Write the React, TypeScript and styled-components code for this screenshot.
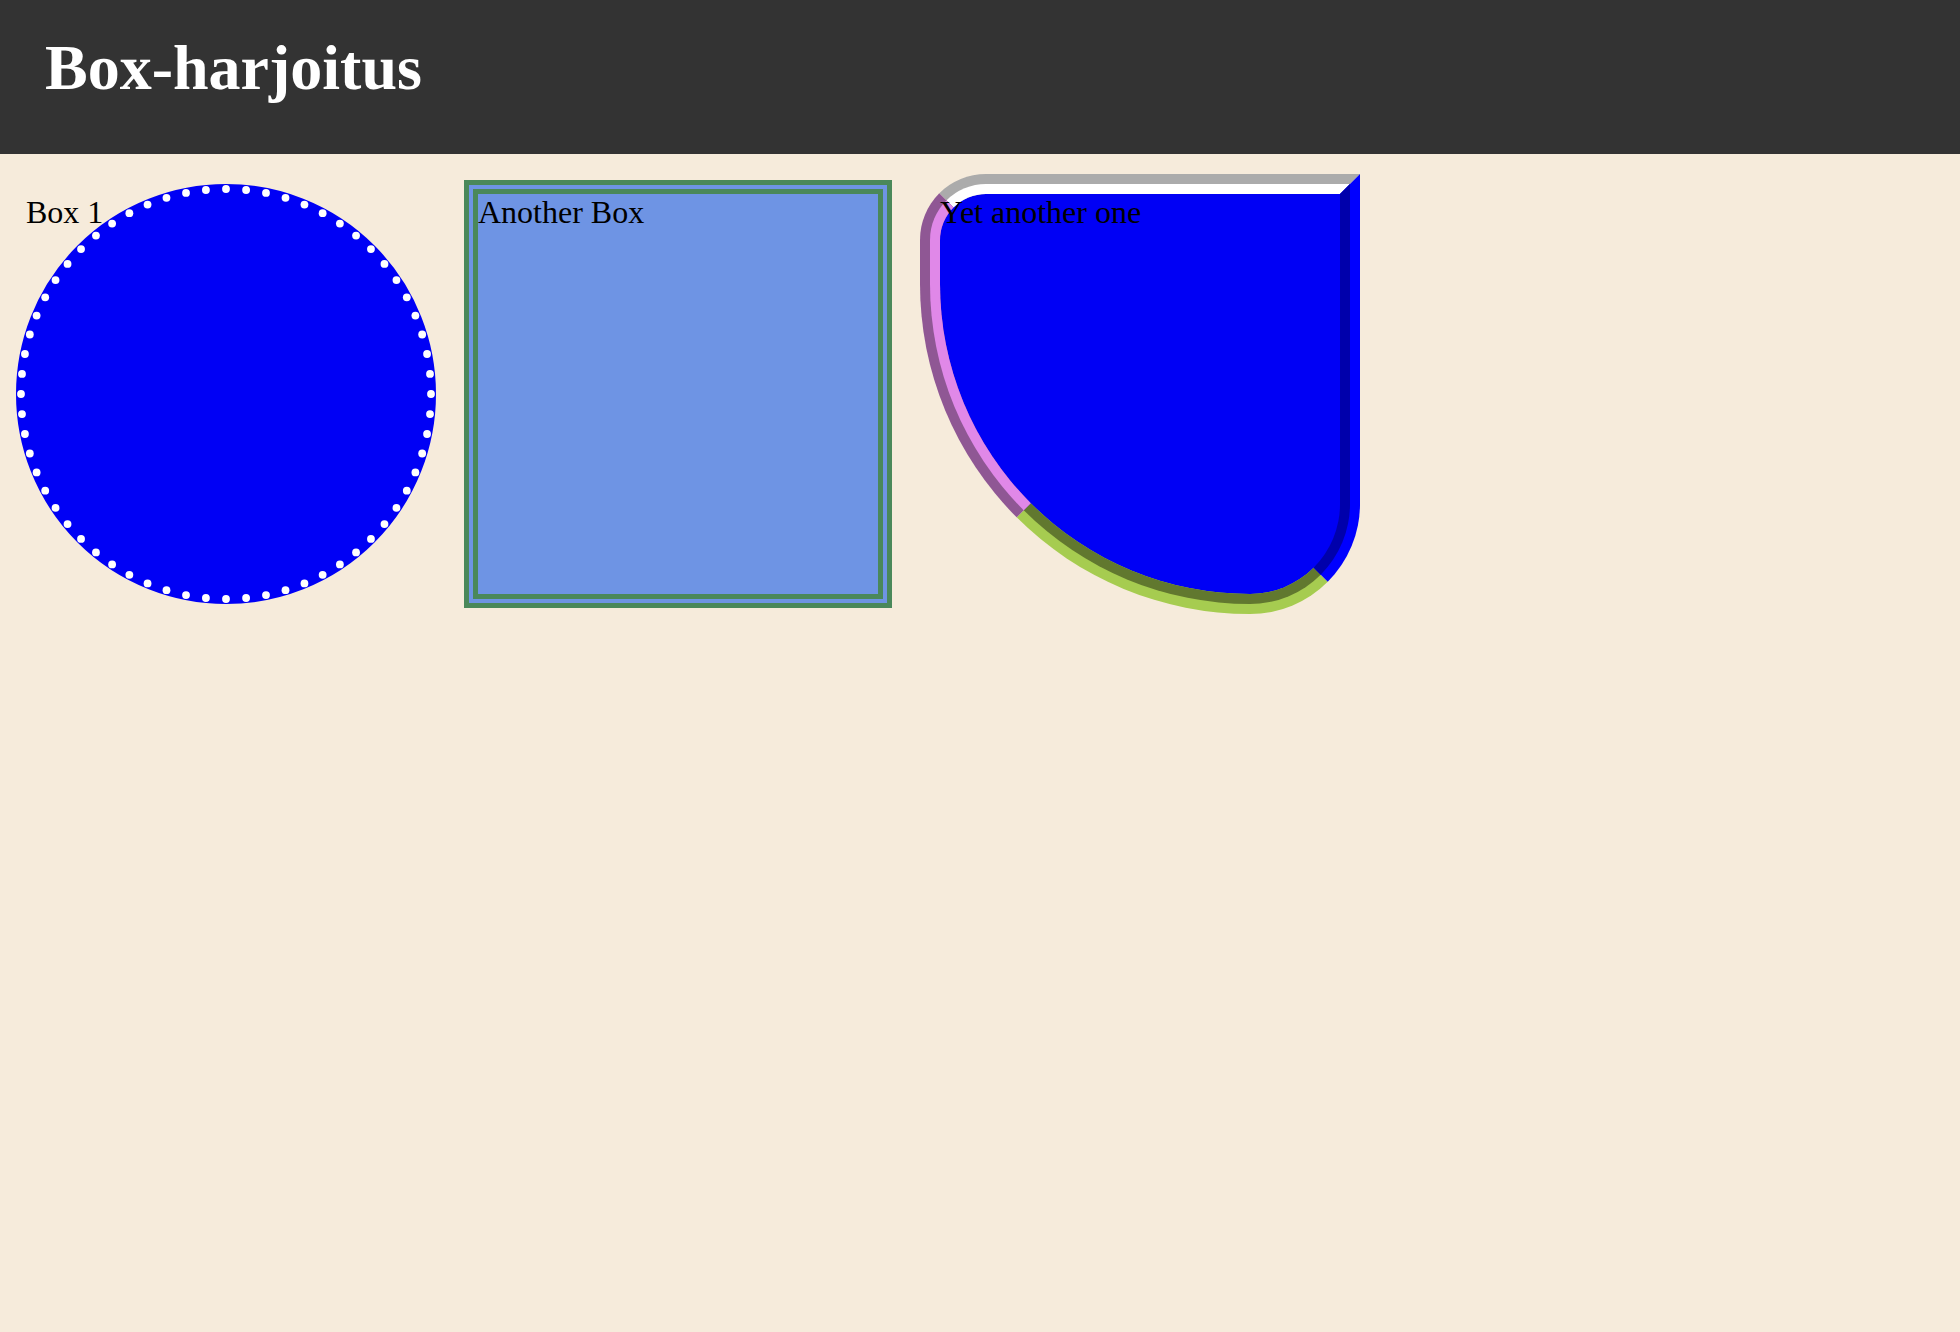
import React from "react";
import styled, { createGlobalStyle } from "styled-components";

const GlobalStyle = createGlobalStyle`
  html, body {
    margin: 0;
    padding: 0;
    background: #f6ebdb;
    min-height: 100%;
  }
  body {
    font-family: "Liberation Serif", "Times New Roman", serif;
    color: #000;
  }
`;

const Page = styled.div`
  min-height: 100vh;
  background: #f6ebdb;
`;

const Header = styled.header`
  box-sizing: border-box;
  height: 154px;
  padding: 31px 45px 0;
  background: #333333;
`;

const Title = styled.h1`
  margin: 0;
  font-family: "Liberation Serif", "Times New Roman", serif;
  font-weight: bold;
  font-size: 64px;
  color: #ffffff;
`;

const Boxes = styled.main`
  display: flex;
  align-items: baseline;
  gap: 28px;
  padding: 20px 16px;
`;

const BoxBase = styled.div`
  position: relative;
  flex: 0 0 auto;
  width: 400px;
  height: 400px;
  padding: 0;
  font-size: 32px;
`;

const CircleBox = styled(BoxBase)`
  border: 10px solid #0000f5;
  border-radius: 50%;
  background: #0000f5;
`;

const DotRing = styled.svg`
  position: absolute;
  left: -10px;
  top: -10px;
  width: 420px;
  height: 420px;
  overflow: visible;
  pointer-events: none;
`;

const DoubleBox = styled(BoxBase)`
  border: 5px solid #4a885a;
  padding: 9px;
  background: #6e94e4;
  box-shadow: inset 0 0 0 4px #6e94e4, inset 0 0 0 9px #4a885a;
`;

const GrooveBox = styled(BoxBase)`
  border-width: 20px;
  border-style: groove;
  border-color: #ffffff #0000ff #a6cc50 #e088e8;
  border-radius: 15% 0 25% 75%;
  background: #0000f5;
`;

const Label = styled.span`
  position: relative;
`;

const DOTS = Array.from({ length: 64 }, (_, i) => {
  const a = (i / 64) * Math.PI * 2;
  return { x: 210 + 205 * Math.cos(a), y: 210 + 205 * Math.sin(a) };
});

export default function App() {
  return (
    <Page>
      <GlobalStyle />
      <Header>
        <Title>Box-harjoitus</Title>
      </Header>
      <Boxes>
        <CircleBox>
          <DotRing viewBox="0 0 420 420" aria-hidden="true">
            {DOTS.map((d, i) => (
              <circle key={i} cx={d.x} cy={d.y} r={3.9} fill="#ffffff" />
            ))}
          </DotRing>
          <Label>Box 1</Label>
        </CircleBox>
        <DoubleBox>
          <Label>Another Box</Label>
        </DoubleBox>
        <GrooveBox>
          <Label>Yet another one</Label>
        </GrooveBox>
      </Boxes>
    </Page>
  );
}
